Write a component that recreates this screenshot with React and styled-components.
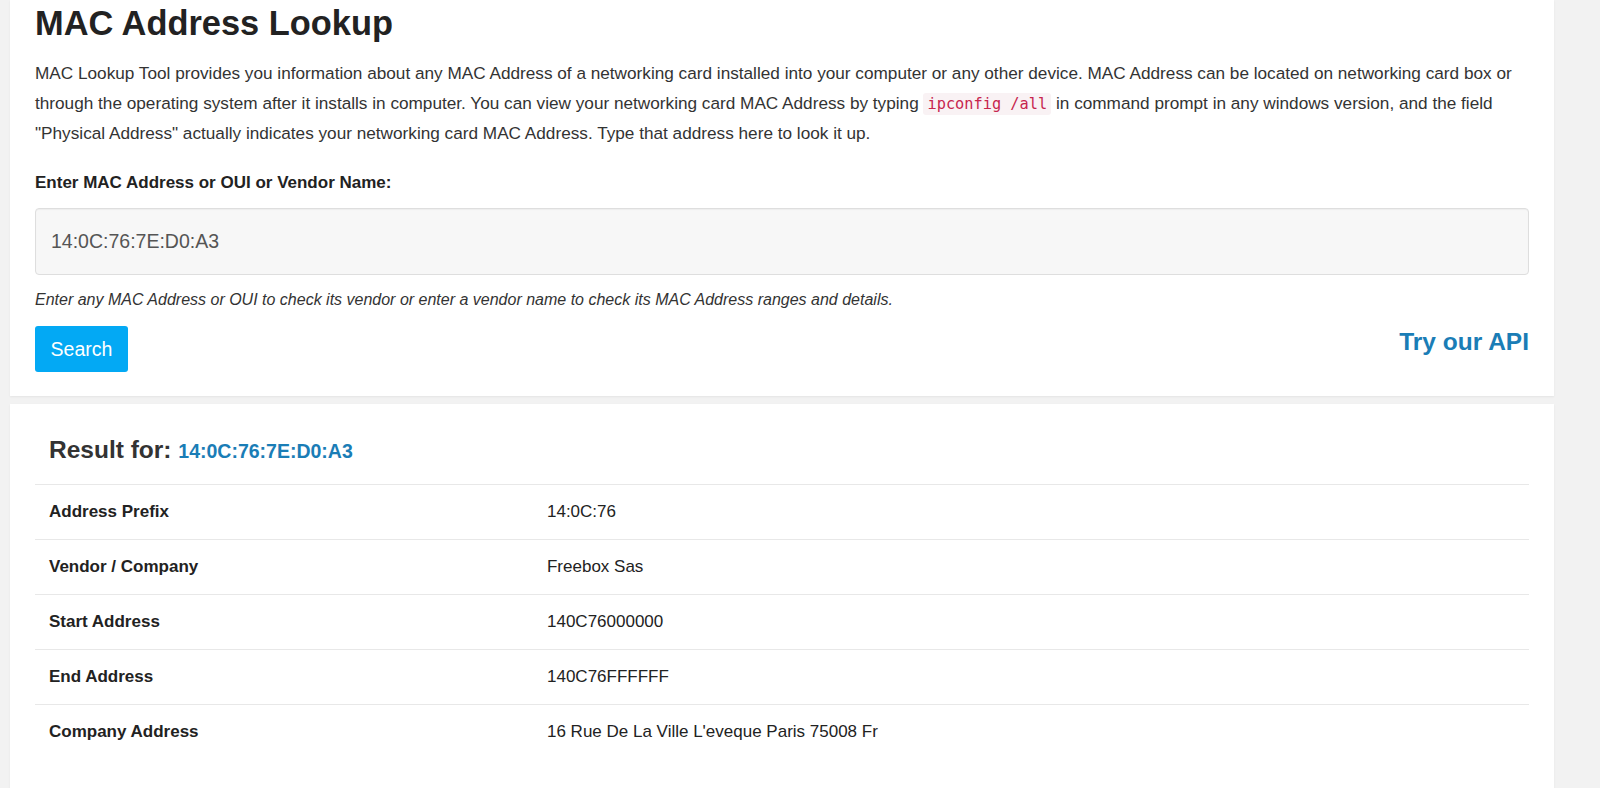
import React from "react";
import styled, { createGlobalStyle } from "styled-components";

const GlobalStyle = createGlobalStyle`
  html, body { margin: 0; padding: 0; }
  body {
    background: #f2f2f2;
    font-family: "Liberation Sans", Arial, sans-serif;
    color: #333;
  }
`;

const Page = styled.div`
  width: 1544px;
  margin-left: 10px;
  display: flex;
  flex-direction: column;
  gap: 8px;
`;

const Panel = styled.section`
  background: #fff;
  box-shadow: 0 1px 2px rgba(0, 0, 0, 0.06);
  padding: ${(p) => p.$pad};
`;

const Title = styled.h1`
  margin: 0;
  font-size: 34.4px;
  line-height: 37px;
  font-weight: 700;
  color: #222;
`;

const Intro = styled.p`
  margin: 16px 0 0;
  font-size: 17.2px;
  line-height: 30px;
  color: #333;
`;

const Code = styled.code`
  font-family: "DejaVu Sans Mono", "Liberation Mono", monospace;
  font-size: 15.3px;
  line-height: 1;
  color: #c7254e;
  background: #f9f2f4;
  padding: 2px 4px;
  border-radius: 3px;
`;

const Label = styled.label`
  display: block;
  margin-top: 25px;
  font-size: 17px;
  line-height: 20px;
  font-weight: 700;
  color: #222;
`;

const Input = styled.input`
  display: block;
  box-sizing: border-box;
  width: 100%;
  height: 67px;
  margin-top: 15px;
  padding: 0 15px;
  background: #f7f7f7;
  border: 1px solid #dedede;
  border-radius: 4px;
  box-shadow: inset 0 1px 1px rgba(0, 0, 0, 0.04);
  font-family: "Liberation Sans", Arial, sans-serif;
  font-size: 19.5px;
  color: #555;
  outline: none;
`;

const Help = styled.p`
  margin: 15px 0 0;
  font-size: 16px;
  line-height: 20px;
  font-style: italic;
  color: #333;
`;

const ActionRow = styled.div`
  display: flex;
  justify-content: space-between;
  align-items: center;
  margin-top: 16px;
`;

const Button = styled.button`
  width: 93px;
  height: 46px;
  border: none;
  border-radius: 3px;
  background: #03a9f4;
  color: #fff;
  font-family: "Liberation Sans", Arial, sans-serif;
  font-size: 19.5px;
  cursor: pointer;
`;

const ApiLink = styled.a`
  font-size: 24.5px;
  font-weight: 700;
  color: #1a7db6;
  text-decoration: none;
  margin-top: -15px;
`;

const ResultHeading = styled.h2`
  margin: 0;
  padding: 0 14px 21px;
  font-size: 24.5px;
  line-height: 24px;
  font-weight: 700;
  color: #333;
`;

const ResultValue = styled.span`
  font-size: 19.5px;
  color: #1a7db6;
`;

const Table = styled.table`
  width: 100%;
  border-collapse: collapse;
`;

const Row = styled.tr`
  border-top: 1px solid #e8e8e8;
`;

const KeyCell = styled.th`
  width: 33.333%;
  padding: 0 14px;
  height: 54px;
  text-align: left;
  font-size: 17px;
  font-weight: 700;
  color: #222;
`;

const ValueCell = styled.td`
  padding: 0 14px;
  height: 54px;
  font-size: 17px;
  color: #222;
`;

const rows = [
  ["Address Prefix", "14:0C:76"],
  ["Vendor / Company", "Freebox Sas"],
  ["Start Address", "140C76000000"],
  ["End Address", "140C76FFFFFF"],
  ["Company Address", "16 Rue De La Ville L'eveque Paris 75008 Fr"],
];

export default function App() {
  return (
    <>
      <GlobalStyle />
      <Page>
        <Panel $pad="5px 25px 24px">
          <Title>MAC Address Lookup</Title>
          <Intro>
            MAC Lookup Tool provides you information about any MAC Address of a networking card
            installed into your computer or any other device. MAC Address can be located on
            networking card box or through the operating system after it installs in computer. You
            can view your networking card MAC Address by typing <Code>ipconfig /all</Code> in
            command prompt in any windows version, and the field "Physical Address" actually
            indicates your networking card MAC Address. Type that address here to look it up.
          </Intro>
          <Label htmlFor="mac">Enter MAC Address or OUI or Vendor Name:</Label>
          <Input id="mac" defaultValue="14:0C:76:7E:D0:A3" />
          <Help>
            Enter any MAC Address or OUI to check its vendor or enter a vendor name to check its MAC
            Address ranges and details.
          </Help>
          <ActionRow>
            <Button type="button">Search</Button>
            <ApiLink href="#">Try our API</ApiLink>
          </ActionRow>
        </Panel>
        <Panel $pad="34px 25px 60px">
          <ResultHeading>
            Result for: <ResultValue>14:0C:76:7E:D0:A3</ResultValue>
          </ResultHeading>
          <Table>
            <tbody>
              {rows.map(([k, v]) => (
                <Row key={k}>
                  <KeyCell>{k}</KeyCell>
                  <ValueCell>{v}</ValueCell>
                </Row>
              ))}
            </tbody>
          </Table>
        </Panel>
      </Page>
    </>
  );
}
